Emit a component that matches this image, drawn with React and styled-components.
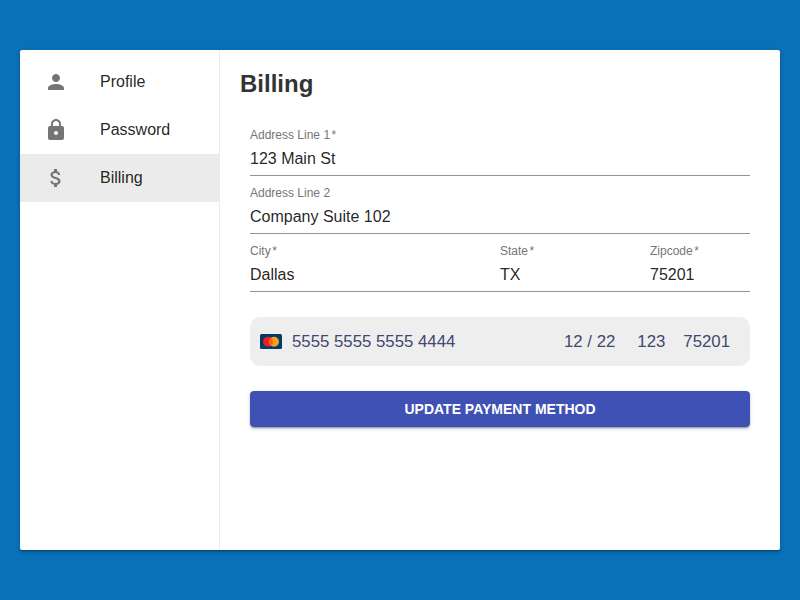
import React from "react";
import styled, { createGlobalStyle } from "styled-components";

const GlobalStyle = createGlobalStyle`
  * { box-sizing: border-box; }
  body {
    margin: 0;
    background: #0971b8;
    font-family: "Liberation Sans", Arial, sans-serif;
    color: rgba(0, 0, 0, 0.87);
  }
`;

const Page = styled.div`
  height: 100vh;
  padding: 50px 20px;
  overflow: hidden;
`;

const Card = styled.div`
  display: flex;
  height: 500px;
  background: #fff;
  border-radius: 2px;
  box-shadow: 0 1px 5px rgba(0, 0, 0, 0.2), 0 2px 2px rgba(0, 0, 0, 0.14), 0 3px 1px -2px rgba(0, 0, 0, 0.12);
`;

const Sidebar = styled.nav`
  flex: 0 0 200px;
  padding-top: 8px;
  border-right: 1px solid #ebebeb;
`;

const NavItem = styled.div`
  display: flex;
  align-items: center;
  height: 48px;
  padding-left: 24px;
  background: ${(p) => (p.$active ? "#ebebeb" : "transparent")};
  font-size: 16px;
  line-height: 24px;
`;

const NavIcon = styled.svg`
  width: 24px;
  height: 24px;
  margin-right: 32px;
  fill: #757575;
`;

const Content = styled.main`
  flex: 1;
  padding: 20px;
`;

const Title = styled.h1`
  margin: 0;
  font-size: 24px;
  line-height: 28px;
  color: #333;
`;

const Form = styled.div`
  padding: 30px 10px 0;
`;

const FieldRow = styled.div`
  display: grid;
  grid-template-columns: ${(p) => p.$columns || "1fr"};
  margin-bottom: 10px;
`;

const Field = styled.div`
  height: 48px;
  border-bottom: 1px solid #949494;
`;

const Label = styled.div`
  height: 16px;
  font-size: 12px;
  line-height: 14px;
  color: #757575;
`;

const Required = styled.span`
  margin-left: 1.5px;
`;

const Value = styled.div`
  font-size: 16px;
  line-height: 30px;
`;

const CardInput = styled.div`
  display: flex;
  align-items: center;
  height: 49px;
  margin-top: 25px;
  padding: 0 20px 0 10px;
  border-radius: 10px;
  background: #eee;
  color: #424770;
  font-size: 16.8px;
`;

const BrandMark = styled.svg`
  width: 22px;
  height: 15px;
  margin-right: 10px;
`;

const CardNumber = styled.span`
  flex: 1;
`;

const CardPart = styled.span`
  margin-left: ${(p) => p.$gap}px;
`;

const Button = styled.button`
  display: block;
  width: 100%;
  height: 36px;
  margin-top: 25px;
  padding: 0;
  border: 0;
  border-radius: 4px;
  background: #3f51b5;
  color: #fff;
  font: 700 14px "Liberation Sans", Arial, sans-serif;
  box-shadow: 0 3px 1px -2px rgba(0, 0, 0, 0.2), 0 2px 2px rgba(0, 0, 0, 0.14), 0 1px 5px rgba(0, 0, 0, 0.12);
`;

const NAV = [
  { label: "Profile", d: "M12 12c2.21 0 4-1.79 4-4s-1.79-4-4-4-4 1.79-4 4 1.79 4 4 4zm0 2c-2.67 0-8 1.34-8 4v2h16v-2c0-2.66-5.33-4-8-4z" },
  { label: "Password", d: "M18 8h-1V6c0-2.76-2.24-5-5-5S7 3.24 7 6v2H6c-1.1 0-2 .9-2 2v10c0 1.1.9 2 2 2h12c1.1 0 2-.9 2-2V10c0-1.1-.9-2-2-2zm-6 9c-1.1 0-2-.9-2-2s.9-2 2-2 2 .9 2 2-.9 2-2 2zm3.1-9H8.9V6c0-1.71 1.39-3.1 3.1-3.1 1.71 0 3.1 1.39 3.1 3.1v2z" },
  { label: "Billing", active: true, d: "M11.8 10.9c-2.27-.59-3-1.2-3-2.15 0-1.09 1.01-1.85 2.7-1.85 1.78 0 2.44.85 2.5 2.1h2.21c-.07-1.72-1.12-3.3-3.21-3.81V3h-3v2.16c-1.94.42-3.5 1.68-3.5 3.61 0 2.31 1.91 3.46 4.7 4.13 2.5.6 3 1.48 3 2.41 0 .69-.49 1.79-2.7 1.79-2.06 0-2.87-.92-2.98-2.1h-2.2c.12 2.19 1.76 3.42 3.68 3.83V21h3v-2.15c1.95-.37 3.5-1.5 3.5-3.55 0-2.84-2.43-3.81-4.7-4.4z" },
];

const ROWS = [
  { fields: [["Address Line 1", "123 Main St", true]] },
  { fields: [["Address Line 2", "Company Suite 102", false]] },
  { columns: "250px 150px 100px", fields: [["City", "Dallas", true], ["State", "TX", true], ["Zipcode", "75201", true]] },
];

export default function App() {
  return (
    <Page>
      <GlobalStyle />
      <Card>
        <Sidebar>
          {NAV.map((item) => (
            <NavItem key={item.label} $active={item.active}>
              <NavIcon viewBox="0 0 24 24"><path d={item.d} /></NavIcon>
              {item.label}
            </NavItem>
          ))}
        </Sidebar>
        <Content>
          <Title>Billing</Title>
          <Form>
            {ROWS.map((row) => (
              <FieldRow key={row.fields[0][0]} $columns={row.columns}>
                {row.fields.map(([label, value, required]) => (
                  <Field key={label}>
                    <Label>{label}{required && <Required>*</Required>}</Label>
                    <Value>{value}</Value>
                  </Field>
                ))}
              </FieldRow>
            ))}
            <CardInput>
              <BrandMark viewBox="0 0 22 15">
                <rect width="22" height="15" rx="1.5" fill="#043a67" />
                <circle cx="8" cy="7.7" r="5" fill="#eb1c26" />
                <circle cx="14" cy="7.7" r="5" fill="#f99f1b" />
                <path d="M11 3.7a5 5 0 0 1 0 8 5 5 0 0 1 0-8z" fill="#f26122" />
              </BrandMark>
              <CardNumber>5555 5555 5555 4444</CardNumber>
              <CardPart $gap={0}>12 / 22</CardPart>
              <CardPart $gap={22}>123</CardPart>
              <CardPart $gap={18}>75201</CardPart>
            </CardInput>
            <Button>UPDATE PAYMENT METHOD</Button>
          </Form>
        </Content>
      </Card>
    </Page>
  );
}
